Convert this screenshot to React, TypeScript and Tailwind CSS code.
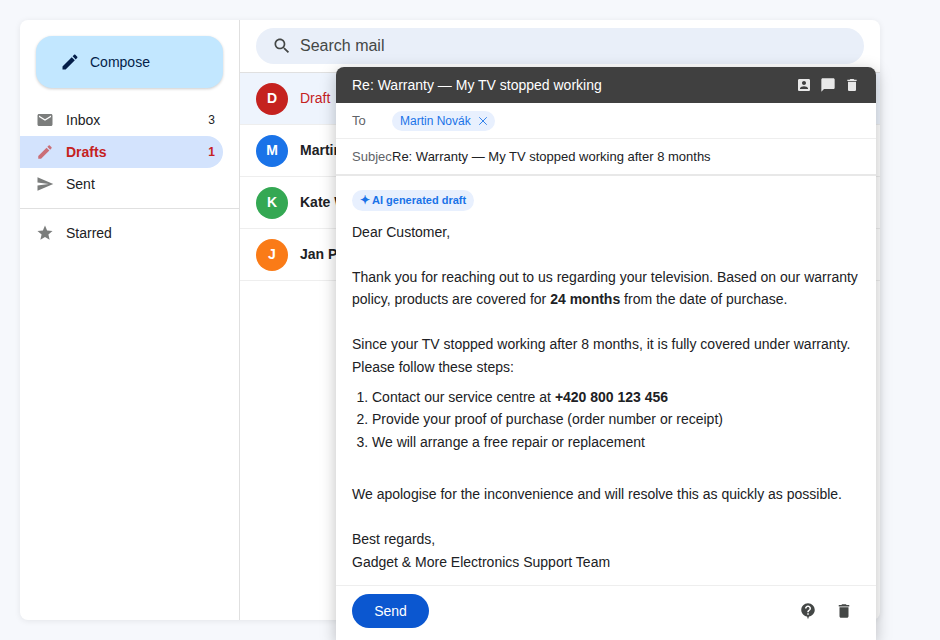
import React from 'react';
import { X } from 'lucide-react';

const icons = {
  edit: 'M3 17.25V21h3.75L17.81 9.94l-3.75-3.75L3 17.25zM20.71 7.04c.39-.39.39-1.02 0-1.41l-2.34-2.34c-.39-.39-1.02-.39-1.41 0l-1.83 1.83 3.75 3.75 1.83-1.83z',
  mail: 'M20 4H4c-1.1 0-1.99.9-1.99 2L2 18c0 1.1.9 2 2 2h16c1.1 0 2-.9 2-2V6c0-1.1-.9-2-2-2zm0 4l-8 5-8-5V6l8 5 8-5v2z',
  send: 'M2.01 21L23 12 2.01 3 2 10l15 2-15 2z',
  star: 'M12 17.27L18.18 21l-1.64-7.03L22 9.24l-7.19-.61L12 2 9.19 8.63 2 9.24l5.46 4.73L5.82 21z',
  search: 'M15.5 14h-.79l-.28-.27C15.41 12.59 16 11.11 16 9.5 16 5.91 13.09 3 9.5 3S3 5.91 3 9.5 5.91 16 9.5 16c1.61 0 3.09-.59 4.23-1.57l.27.28v.79l5 4.99L20.49 19l-4.99-5zm-6 0C7.01 14 5 11.99 5 9.5S7.01 5 9.5 5 14 7.01 14 9.5 11.99 14 9.5 14z',
  trash: 'M6 19c0 1.1.9 2 2 2h8c1.1 0 2-.9 2-2V7H6v12zM19 4h-3.5l-1-1h-5l-1 1H5v2h14V4z',
  chat: 'M20 2H4c-1.1 0-2 .9-2 2v18l4-4h14c1.1 0 2-.9 2-2V4c0-1.1-.9-2-2-2z',
  person: 'M3 5v14c0 1.1.89 2 2 2h14c1.1 0 2-.9 2-2V5c0-1.1-.9-2-2-2H5c-1.11 0-2 .9-2 2zm12 4c0 1.66-1.34 3-3 3s-3-1.34-3-3 1.34-3 3-3 3 1.34 3 3zm-9 8c0-2 4-3.1 6-3.1s6 1.1 6 3.1v1H6v-1z',
  help: 'M12 1.5C7 1.5 3 5.5 3 10.5c0 4.3 3.4 8 7.7 8.8L12 23l1.3-3.700C17.600 18.500 21 14.800 21 10.500 21 5.500 17 1.500 12 1.500zM13 17h-2v-2h2v2zM13 13.500h-2c0-3.200 3-3 3-5 0-1.100-.9-2-2-2s-2 .9-2 2H8c0-2.200 1.800-4 4-4s4 1.800 4 4c0 2.500-3 2.800-3 5z',
};

const Icon = ({ d, className }: { d: string; className: string }) => (
  <svg viewBox="0 0 24 24" fill="currentColor" fillRule="evenodd" className={className}>
    <path d={d} />
  </svg>
);

const navItems = [
  { label: 'Inbox', icon: icons.mail, count: '3' },
  { label: 'Drafts', icon: icons.edit, count: '1', active: true },
  { label: 'Sent', icon: icons.send },
];

const threads = [
  { letter: 'D', name: 'Draft', color: 'bg-[#c5221f]', active: true },
  { letter: 'M', name: 'Martin Novák', color: 'bg-[#1a73e8]' },
  { letter: 'K', name: 'Kate Wilson', color: 'bg-[#34a853]' },
  { letter: 'J', name: 'Jan Pokorný', color: 'bg-[#fa7b17]' },
];

const App: React.FC = () => {
  return (
    <div className="relative h-[640px] w-[940px] overflow-hidden bg-[#f6f8fc] p-5 font-['Liberation_Sans',Arial,sans-serif] text-[14px] text-[#202124]">
      <div className="flex h-[600px] w-[860px] overflow-hidden rounded-lg bg-white shadow-[0_1px_6px_rgba(0,0,0,0.08)]">
        <aside className="w-[220px] shrink-0 border-r border-[#e0e0e0] pt-4">
          <button className="ml-4 flex h-[52px] w-[187px] items-center gap-2.5 rounded-2xl bg-[#c2e7ff] pl-6 text-[14px] text-[#041e49] shadow-[0_1px_3px_rgba(0,0,0,0.2)]">
            <Icon d={icons.edit} className="h-5 w-5" />
            <span>Compose</span>
          </button>

          <nav className="mt-4">
            {navItems.map((item) => (
              <div
                key={item.label}
                className={`flex h-8 w-[203px] items-center rounded-r-2xl pl-4 pr-2 ${item.active ? 'bg-[#d3e3fd] font-bold text-[#c5221f]' : 'text-[#202124]'}`}
              >
                <Icon d={item.icon} className={`h-[18px] w-[18px] shrink-0 ${item.active ? 'text-[#c5221f] opacity-60' : 'text-[#444746] opacity-70'}`} />
                <span className="ml-3">{item.label}</span>
                {item.count && <span className="ml-auto text-[12px]">{item.count}</span>}
              </div>
            ))}
          </nav>

          <div className="mt-2 border-t border-[#e0e0e0] pt-2">
            <div className="flex h-8 items-center pl-4 text-[#202124]">
              <Icon d={icons.star} className="h-[18px] w-[18px] text-[#444746] opacity-70" />
              <span className="ml-3">Starred</span>
            </div>
          </div>
        </aside>

        <main className="min-w-0 flex-1">
          <div className="flex h-[53px] items-start border-b border-[#e0e0e0] px-4 pt-2">
            <div className="flex h-9 w-full items-center gap-2 rounded-[18px] bg-[#e9eff9] px-4 text-[16px] text-[#444746]">
              <Icon d={icons.search} className="h-5 w-5 text-[#444746]" />
              <span>Search mail</span>
            </div>
          </div>
          {threads.map((thread) => (
            <div
              key={thread.letter}
              className={`flex h-[52px] items-center gap-3 border-b border-[#eeeeee] px-4 ${thread.active ? 'bg-[#eef4fd]' : ''}`}
            >
              <div className={`flex h-8 w-8 items-center justify-center rounded-full text-[14px] font-bold text-white ${thread.color}`}>
                {thread.letter}
              </div>
              <span className={thread.active ? 'text-[#c5221f]' : 'font-bold text-[#202124]'}>{thread.name}</span>
            </div>
          ))}
        </main>
      </div>

      <section className="absolute left-[336px] top-[67px] w-[540px] overflow-hidden rounded-t-lg bg-white shadow-[0_4px_16px_rgba(0,0,0,0.25)]">
        <header className="flex h-9 items-center justify-between bg-[#404040] pl-4 pr-4 text-[14px] text-white">
          <span>Re: Warranty — My TV stopped working</span>
          <div className="flex items-center gap-2 text-[#e8e8e8]">
            <Icon d={icons.person} className="h-4 w-4" />
            <Icon d={icons.chat} className="h-4 w-4" />
            <Icon d={icons.trash} className="h-4 w-4" />
          </div>
        </header>

        <div className="flex h-9 items-center border-b border-[#eeeeee] px-4">
          <span className="w-10 text-[13px] text-[#5f6368]">To</span>
          <span className="flex h-5 items-center gap-[5px] rounded-[10px] bg-[#e8f0fe] pl-2 pr-[5px] text-[12px] text-[#1a73e8]">
            Martin Novák
            <X className="h-3.5 w-3.5" strokeWidth={1.5} />
          </span>
        </div>
        <div className="flex h-[37px] items-center border-b-2 border-[#e8e8e8] px-4">
          <span className="w-10 shrink-0 overflow-hidden whitespace-nowrap text-[13px] text-[#5f6368]">Subject</span>
          <span className="text-[13px] text-[#202124]">Re: Warranty — My TV stopped working after 8 months</span>
        </div>

        <div className="h-[409px] px-4 pt-3 text-[14px] leading-[22.4px] text-[#202124]">
          <span className="inline-flex h-[21px] items-center gap-[2px] rounded-[11px] bg-[#e8f0fe] px-2 text-[11px] font-bold text-[#1a73e8]">
            <span className="text-[12px]">✦</span> AI generated draft
          </span>
          <p className="mt-[10.4px]">Dear Customer,</p>
          <p className="mt-[22.4px]">
            Thank you for reaching out to us regarding your television. Based on our warranty policy, products are covered for <b>24 months</b> from the date of purchase.
          </p>
          <p className="mt-[22.4px]">
            Since your TV stopped working after 8 months, it is fully covered under warranty. Please follow these steps:
          </p>
          <ol className="my-2 list-decimal pl-5">
            <li>Contact our service centre at <b>+420 800 123 456</b></li>
            <li>Provide your proof of purchase (order number or receipt)</li>
            <li>We will arrange a free repair or replacement</li>
          </ol>
          <p className="mt-[30px]">We apologise for the inconvenience and will resolve this as quickly as possible.</p>
          <p className="mt-[22.4px]">Best regards,</p>
          <p className="mt-px">Gadget &amp; More Electronics Support Team</p>
        </div>

        <footer className="flex h-[56px] items-start justify-between border-t border-[#eeeeee] pl-4 pr-[23px] pt-2">
          <button className="h-[34px] w-[77px] rounded-[17px] bg-[#0b57d0] text-[14px] text-white">Send</button>
          <div className="mt-2 flex items-center gap-[18px] text-[#444746]">
            <Icon d={icons.help} className="h-[18px] w-[18px]" />
            <Icon d={icons.trash} className="h-[18px] w-[18px]" />
          </div>
        </footer>
      </section>
    </div>
  );
};

export default App;
